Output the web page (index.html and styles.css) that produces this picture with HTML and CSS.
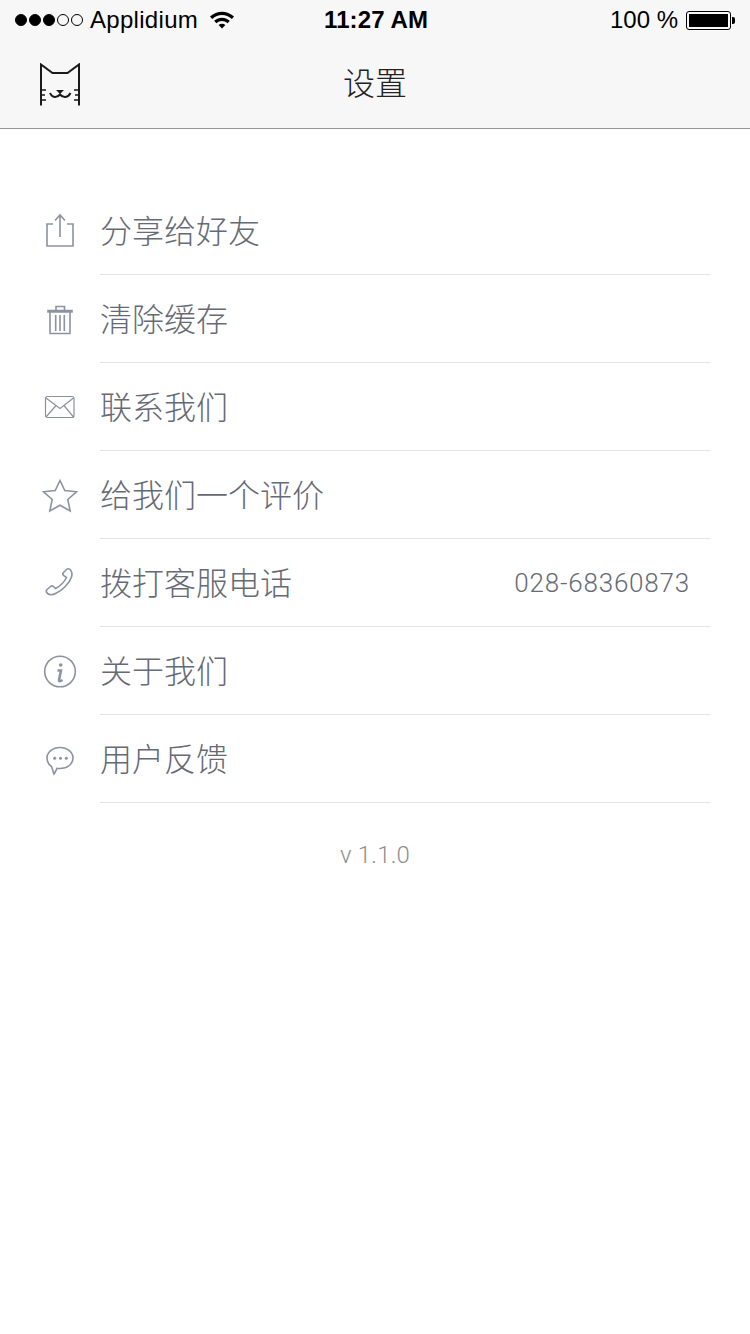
FILE: index.html
```html
<!DOCTYPE html>
<html lang="zh-CN">
<head>
  <meta charset="UTF-8">
  <title>设置</title>
  <link rel="stylesheet" href="styles.css">
</head>
<body>

<header class="top">
  <!-- status bar -->
  <div class="status">
    <div class="status-left">
      <span class="dot on"></span><span class="dot on"></span><span class="dot on"></span><span class="dot"></span><span class="dot"></span>
      <span class="carrier">Applidium</span>
      <svg class="wifi" width="26" height="19" viewBox="0 0 26 19">
        <path d="M1 6.500C8 0 18 0 25 6.500L22.800 9C17 3.800 9 3.800 3.200 9Z"/>
        <path d="M5.200 10.800C10 6.600 16 6.600 20.800 10.800L18.600 13.200C15 10.200 11 10.200 7.400 13.200Z"/>
        <path d="M9.600 15C11.600 13.400 14.400 13.400 16.400 15L13 18.500Z"/>
      </svg>
    </div>
    <div class="clock">11:27 AM</div>
    <div class="status-right">
      <span class="percent">100 %</span>
      <span class="battery"><span class="battery-fill"></span></span>
      <span class="battery-tip"></span>
    </div>
  </div>

  <!-- nav bar -->
  <div class="nav">
    <svg class="cat" width="42" height="44" viewBox="0 0 42 44">
      <path d="M2 42.500V1.500L13.500 10H28.500L40 1.500V42.500" fill="none" stroke="#1a1a1a" stroke-width="2"/>
      <path d="M2 27H7M2 32H6M2 37H7M40 27H35M40 32H36M40 37H35" fill="none" stroke="#1a1a1a" stroke-width="1.500"/>
      <path d="M11 30C13 35 18 35 21 31.500C24 35 29 35 31.500 30" fill="none" stroke="#1a1a1a" stroke-width="2"/>
      <path d="M17 27H25L21 31Z" fill="#1a1a1a"/>
    </svg>
    <h1 class="title">设置</h1>
  </div>
</header>

<ul class="menu">
  <li class="row">
    <svg class="icon" width="40" height="40" viewBox="0 0 40 40">
      <path d="M13 13H7V35H33V13H27M20 26V4.500M15 9.500L20 4L25 9.500"/>
    </svg>
    <div class="row-body"><span class="label">分享给好友</span></div>
  </li>
  <li class="row">
    <svg class="icon" width="40" height="40" viewBox="0 0 40 40">
      <path d="M10 13V34.500H30V13M8 11.500H32V13H8ZM16 11V7.500H24.500V11M15.700 16V32M20 16V32M24.300 16V32"/>
    </svg>
    <div class="row-body"><span class="label">清除缓存</span></div>
  </li>
  <li class="row">
    <svg class="icon icon-thin" width="40" height="40" viewBox="0 0 40 40">
      <rect x="5.500" y="9.500" width="28.500" height="21" rx="2"/>
      <path d="M6 11L20 21.500L33.500 11M6 30L16 18.500M33.500 30L24 18.500"/>
    </svg>
    <div class="row-body"><span class="label">联系我们</span></div>
  </li>
  <li class="row">
    <svg class="icon" width="40" height="40" viewBox="0 0 40 40">
      <path d="M20 5.500L24.800 15.500L36.500 16.800L27.800 24.500L30.200 36L20 30.200L9.800 36L12.200 24.500L3.500 16.800L15.200 15.500Z"/>
    </svg>
    <div class="row-body"><span class="label">给我们一个评价</span></div>
  </li>
  <li class="row">
    <svg class="icon" width="40" height="40" viewBox="0 0 40 40">
      <path d="M23.500 9.500L26.500 6.500C27.500 5.700 29 5.700 30 6.500C32 8.500 32.500 11 31.500 14C29.500 20 23 27 15.500 30.500C12.500 32 9.500 32 7.500 30.500C6 29 6 27.500 7 26.500L10.500 23.500C11.500 22.700 12.700 22.800 13.500 23.500L15.500 25.500C19.500 23.500 24.500 18.500 26.500 14.500L23.500 12.500C22.800 11.800 22.800 10.300 23.500 9.500Z"/>
    </svg>
    <div class="row-body">
      <span class="label">拨打客服电话</span>
      <span class="phone">028-68360873</span>
    </div>
  </li>
  <li class="row">
    <svg class="icon" width="40" height="40" viewBox="0 0 40 40">
      <circle cx="20" cy="20.500" r="15.300"/>
      <path class="thick" d="M17.500 19.500H21L19 29C18.800 30.500 20 30.800 22.500 29"/>
      <circle class="solid" cx="20.700" cy="14" r="1.800"/>
    </svg>
    <div class="row-body"><span class="label">关于我们</span></div>
  </li>
  <li class="row">
    <svg class="icon" width="40" height="40" viewBox="0 0 40 40">
      <path d="M20 8.500C27.500 8.500 33 13.500 33 19C33 25 27.500 29.500 20 29.500C19 29.500 18 29.500 17 29.300C16 31.500 15 33.500 14 35C13 32.500 12.500 30 11.500 27.500C8.500 25.500 7 22.500 7 19C7 13.500 12.500 8.500 20 8.500Z"/>
      <circle class="solid" cx="14.700" cy="19.300" r="1.500"/>
      <circle class="solid" cx="20.500" cy="19.300" r="1.500"/>
      <circle class="solid" cx="26.300" cy="19.300" r="1.500"/>
    </svg>
    <div class="row-body"><span class="label">用户反馈</span></div>
  </li>
</ul>

<p class="version">v 1.1.0</p>

</body>
</html>
```

FILE: styles.css
```css
html, body {
    margin: 0;
    padding: 0;
    background-color: #fff;
}

body {
    width: 750px;
    height: 1334px;
    overflow: hidden;
    font-family: "Liberation Sans", "Noto Sans CJK SC", sans-serif;
}

.top {
    height: 128px;
    background-color: #f7f7f7;
    border-bottom: 1px solid #969696;
}

.status {
    height: 40px;
    display: grid;
    grid-template-columns: 1fr auto 1fr;
    align-items: center;
    color: #000;
    font-size: 24px;
}

.status-left {
    display: flex;
    align-items: center;
    padding-left: 15px;
}

.dot {
    width: 10px;
    height: 10px;
    margin-right: 2px;
    border: 1px solid #000;
    border-radius: 50%;
    box-sizing: content-box;
}

.dot.on {
    background-color: #000;
}

.carrier {
    margin-left: 5px;
    letter-spacing: 0.3px;
}

.wifi {
    margin-left: 11px;
    margin-top: -2px;
}

.clock {
    margin-left: 2px;
    font-weight: bold;
    letter-spacing: 0.1px;
}

.status-right {
    display: flex;
    align-items: center;
    justify-content: flex-end;
    padding-right: 15px;
}

.battery {
    width: 45px;
    height: 19px;
    margin-left: 8px;
    padding: 2px;
    border: 1px solid #000;
    border-radius: 3px;
    box-sizing: border-box;
    display: flex;
}

.battery-fill {
    flex: 1;
    background-color: #000;
}

.battery-tip {
    width: 3px;
    height: 7px;
    margin-left: 1px;
    background-color: #000;
    border-radius: 0 2px 2px 0;
}

.nav {
    height: 88px;
    box-sizing: border-box;
    padding-bottom: 6px;
    display: flex;
    align-items: center;
    justify-content: center;
    position: relative;
}

.cat {
    position: absolute;
    left: 39px;
    top: 23px;
}

.title {
    margin: 0;
    font-size: 32px;
    font-weight: 300;
    color: #222;
}

.menu {
    list-style: none;
    margin: 0;
    padding: 58px 40px 0 40px;
}

.row {
    height: 88px;
    display: flex;
    align-items: center;
}

.icon {
    flex: none;
    width: 40px;
    height: 40px;
    margin-right: 20px;
    fill: none;
    stroke: #8d92a1;
    stroke-width: 1.600;
}

.icon-thin {
    stroke-width: 1.200;
}

.icon .solid {
    fill: #8d92a1;
    stroke: none;
}

.icon .thick {
    stroke-width: 2.500;
}

.row-body {
    flex: 1;
    height: 100%;
    box-sizing: border-box;
    display: flex;
    align-items: center;
    justify-content: space-between;
    border-bottom: 1px solid #e3e3e3;
    padding-right: 20px;
    padding-bottom: 4px;
}

.label {
    font-size: 32px;
    font-weight: 300;
    color: #666a75;
}

.phone {
    margin-top: 4px;
    font-family: "Roboto", sans-serif;
    font-weight: 300;
    font-size: 26px;
    letter-spacing: 0.8px;
    color: #666a75;
}

.version {
    margin: 38px 0 0 0;
    text-align: center;
    font-family: "Roboto", sans-serif;
    font-weight: 300;
    font-size: 24px;
    letter-spacing: 0.2px;
    color: #8f8f8f;
}
```
